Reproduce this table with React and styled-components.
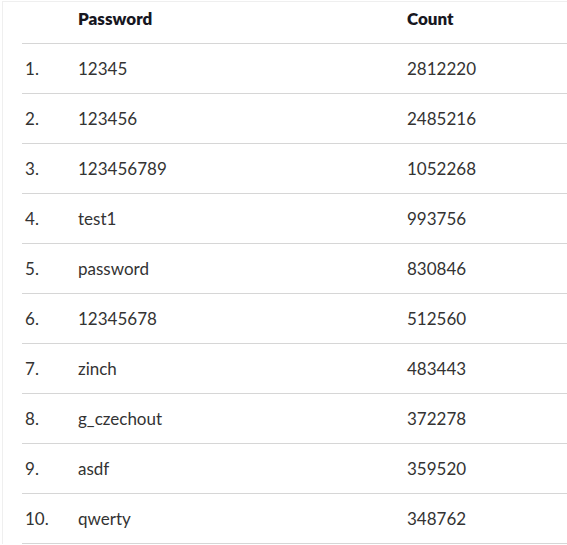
import React from "react";
import styled, { createGlobalStyle } from "styled-components";

const GlobalStyle = createGlobalStyle`
  body {
    margin: 0;
    background: #ffffff;
    font-family: "Lato", "Open Sans", sans-serif;
  }
`;

const Frame = styled.div`
  margin: 1px 0 0 2px;
  border-top: 1px solid #efefef;
  border-left: 1px solid #efefef;
  padding-left: 19px;
  height: 543px;
  box-sizing: border-box;
`;

const Row = styled.div`
  display: grid;
  grid-template-columns: 53px 329px 1fr;
  align-items: center;
  height: ${(props) => (props.header ? "33px" : "49px")};
  padding-left: 3px;
  padding-bottom: ${(props) => (props.header ? "8px" : "0")};
  border-bottom: 1px solid #d6d6d6;
  font-size: 17px;
  color: ${(props) => (props.header ? "#17171f" : "#333333")};
  font-weight: ${(props) => (props.header ? 800 : 400)};
`;

const Cell = styled.div`
  white-space: nowrap;
`;

const rows = [
  ["12345", "2812220"],
  ["123456", "2485216"],
  ["123456789", "1052268"],
  ["test1", "993756"],
  ["password", "830846"],
  ["12345678", "512560"],
  ["zinch", "483443"],
  ["g_czechout", "372278"],
  ["asdf", "359520"],
  ["qwerty", "348762"],
];

export default function App() {
  return (
    <>
      <GlobalStyle />
      <Frame>
        <Row header>
          <Cell />
          <Cell>Password</Cell>
          <Cell>Count</Cell>
        </Row>
        {rows.map(([pw, count], i) => (
          <Row key={pw}>
            <Cell>{i + 1}.</Cell>
            <Cell>{pw}</Cell>
            <Cell>{count}</Cell>
          </Row>
        ))}
      </Frame>
    </>
  );
}
